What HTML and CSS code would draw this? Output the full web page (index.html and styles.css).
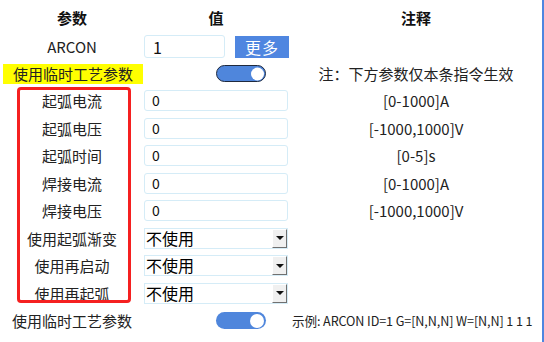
FILE: index.html
```html
<!DOCTYPE html>
<html>
<head>
<meta charset="utf-8">
<link rel="stylesheet" href="styles.css">
</head>
<body>
<div class="page">
  <div class="grid">
    <div class="cell c1 head">参数</div>
    <div class="cell c2 head center">值</div>
    <div class="cell c3 head">注释</div>

    <div class="cell c1">ARCON</div>
    <div class="cell c2"><div class="inp inp-id">1</div><div class="btn">更多</div></div>
    <div class="cell c3"></div>

    <div class="cell c1"><span class="hl">使用临时工艺参数</span></div>
    <div class="cell c2"><div class="toggle bordered"><span class="knob"></span></div></div>
    <div class="cell c3">注：下方参数仅本条指令生效</div>

    <div class="cell c1">起弧电流</div>
    <div class="cell c2"><div class="inp">0</div></div>
    <div class="cell c3">[0-1000]A</div>

    <div class="cell c1">起弧电压</div>
    <div class="cell c2"><div class="inp">0</div></div>
    <div class="cell c3">[-1000,1000]V</div>

    <div class="cell c1">起弧时间</div>
    <div class="cell c2"><div class="inp">0</div></div>
    <div class="cell c3">[0-5]s</div>

    <div class="cell c1">焊接电流</div>
    <div class="cell c2"><div class="inp">0</div></div>
    <div class="cell c3">[0-1000]A</div>

    <div class="cell c1">焊接电压</div>
    <div class="cell c2"><div class="inp">0</div></div>
    <div class="cell c3">[-1000,1000]V</div>

    <div class="cell c1">使用起弧渐变</div>
    <div class="cell c2"><div class="sel"><span class="sel-text">不使用</span><span class="arrow"><span class="tri"></span></span></div></div>
    <div class="cell c3"></div>

    <div class="cell c1">使用再启动</div>
    <div class="cell c2"><div class="sel"><span class="sel-text">不使用</span><span class="arrow"><span class="tri"></span></span></div></div>
    <div class="cell c3"></div>

    <div class="cell c1">使用再起弧</div>
    <div class="cell c2"><div class="sel"><span class="sel-text">不使用</span><span class="arrow"><span class="tri"></span></span></div></div>
    <div class="cell c3"></div>

    <div class="cell c1">使用临时工艺参数</div>
    <div class="cell c2"><div class="toggle"><span class="knob"></span></div></div>
    <div class="cell c3 left example">示例: ARCON ID=1 G=[N,N,N] W=[N,N] 1 1 1</div>
  </div>
  <div class="redbox"></div>
</div>
</body>
</html>
```
FILE: styles.css
```css
html, body {
  margin: 0;
  padding: 0;
  background: #fff;
}
body {
  font-family: "Noto Sans CJK SC", "Noto Sans", sans-serif;
  color: #222;
  font-size: 15px;
}
.page {
  position: relative;
  width: 542px;
  height: 342px;
  border-right: 2px solid #4f86e0;
  overflow: hidden;
}
.grid {
  display: grid;
  grid-template-columns: 144px 146px 1fr;
  grid-template-rows: 33px 27px 27px repeat(9, 27.5px);
}
.cell {
  display: flex;
  align-items: center;
  min-width: 0;
  white-space: nowrap;
}
.c1, .c3 {
  justify-content: center;
}
.c2.center {
  justify-content: center;
  padding-right: 2px;
}
.head {
  font-weight: bold;
  font-size: 15px;
  color: #111;
  padding-top: 2px;
}
.hl {
  background: #ffff00;
  padding: 0 10px;
  line-height: 20px;
  margin-left: 2px;
}
.inp {
  box-sizing: border-box;
  width: 144px;
  height: 21px;
  border: 1px solid #d5ecf7;
  border-radius: 3px;
  padding-left: 7px;
  font-size: 14px;
  line-height: 19px;
  color: #111;
}
.inp-id {
  width: 81px;
  height: 23px;
  padding-left: 8px;
  font-size: 16px;
  line-height: 22px;
}
.btn {
  margin-left: 10px;
  width: 54px;
  height: 22px;
  background: #4f86e0;
  color: #fff;
  font-size: 16px;
  display: flex;
  align-items: center;
  justify-content: center;
  letter-spacing: 1px;
}
.toggle {
  position: relative;
  box-sizing: border-box;
  width: 50px;
  height: 17px;
  margin-left: 72px;
  border-radius: 9px;
  background: #4f86dc;
}
.toggle.bordered {
  border: 1.5px solid #1f2a3e;
}
.knob {
  position: absolute;
  right: 2px;
  top: 50%;
  transform: translateY(-50%);
  width: 14px;
  height: 14px;
  border-radius: 50%;
  background: #fff;
}
.toggle.bordered .knob {
  right: 1px;
  width: 13px;
  height: 13px;
}
.sel {
  box-sizing: border-box;
  width: 144px;
  height: 21px;
  border: 1px solid #d5ecf7;
  display: flex;
  align-items: stretch;
}
.sel-text {
  flex: 1;
  font-size: 16px;
  line-height: 19px;
  color: #000;
  padding-left: 1px;
}
.arrow {
  box-sizing: border-box;
  width: 15px;
  background: #f0f0f0;
  border-top: 1px solid #fff;
  border-left: 1px solid #fff;
  border-right: 1px solid #707070;
  border-bottom: 1px solid #707070;
  display: flex;
  align-items: center;
  justify-content: center;
}
.tri {
  width: 0;
  height: 0;
  border-left: 4px solid transparent;
  border-right: 4px solid transparent;
  border-top: 4px solid #111;
}
.example {
  justify-content: flex-start;
  font-size: 12.6px;
  letter-spacing: -0.1px;
  padding-left: 2px;
}
.redbox {
  position: absolute;
  left: 17px;
  top: 87px;
  width: 114px;
  height: 216px;
  box-sizing: border-box;
  border: 3px solid #f52020;
  border-radius: 4px;
}
```
